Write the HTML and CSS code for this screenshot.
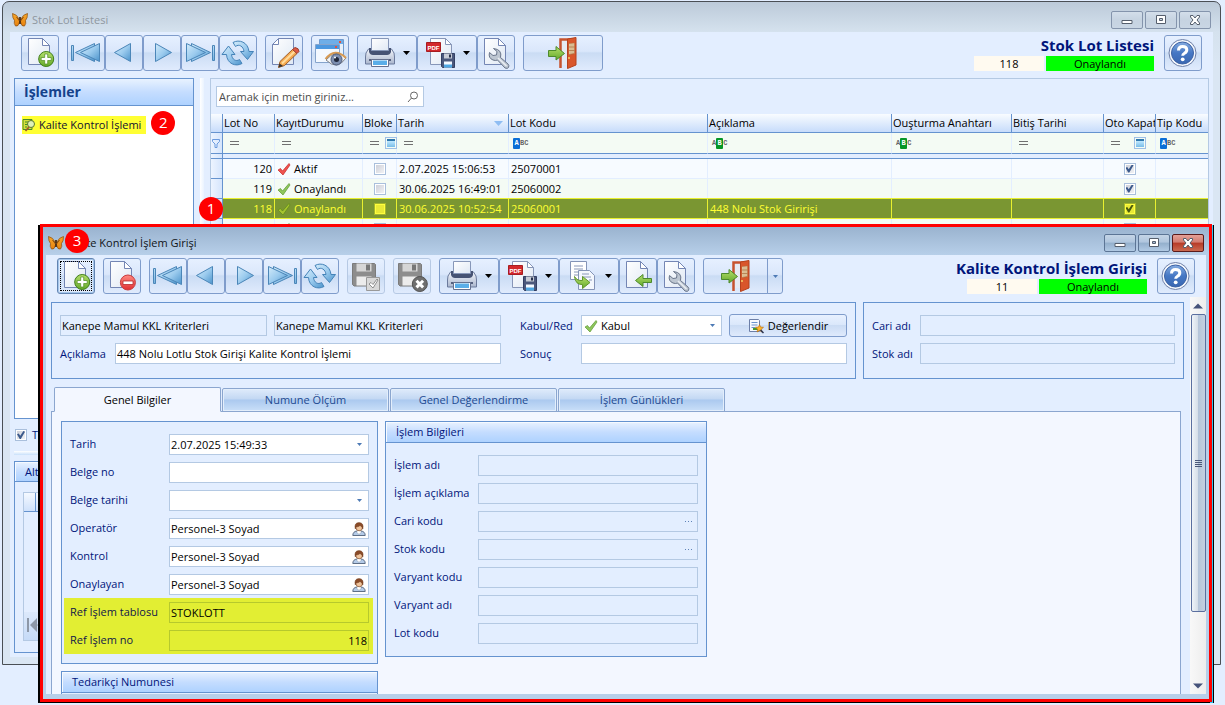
FILE: index.html
```html
<!DOCTYPE html>
<html lang="tr">
<head>
<meta charset="utf-8">
<title>Stok Lot Listesi</title>
<link rel="stylesheet" href="styles.css">
</head>
<body>
<svg class="sprite" aria-hidden="true">
<defs>
<linearGradient id="gPage" x1="0" y1="0" x2="1" y2="1"><stop offset="0" stop-color="#fff"/><stop offset="1" stop-color="#dfe8f4"/></linearGradient>
<linearGradient id="gBlue" x1="0" y1="0" x2="1" y2="1"><stop offset="0" stop-color="#d3ebfa"/><stop offset=".5" stop-color="#9bcbee"/><stop offset="1" stop-color="#4b93cb"/></linearGradient>
<linearGradient id="gGreen" x1="0" y1="0" x2="0" y2="1"><stop offset="0" stop-color="#b5df6c"/><stop offset="1" stop-color="#63a92a"/></linearGradient>
<linearGradient id="gRed" x1="0" y1="0" x2="0" y2="1"><stop offset="0" stop-color="#ff8a80"/><stop offset="1" stop-color="#e02f33"/></linearGradient>
<linearGradient id="gHelp" x1="0" y1="0" x2="0" y2="1"><stop offset="0" stop-color="#86ace0"/><stop offset=".5" stop-color="#4577c4"/><stop offset="1" stop-color="#3a67b1"/></linearGradient>
<linearGradient id="gSteel" x1="0" y1="0" x2="0" y2="1"><stop offset="0" stop-color="#f2f5fb"/><stop offset="1" stop-color="#aab6cd"/></linearGradient>
<linearGradient id="gWing" x1="0" y1="0" x2="0" y2="1"><stop offset="0" stop-color="#f7a82a"/><stop offset="1" stop-color="#e8820f"/></linearGradient>
</defs>
<symbol id="page" viewBox="0 0 36 34"><path d="M6.500 2.500H20.500L27.500 9.500V28.500H6.500Z" fill="url(#gPage)" stroke="#7486b4"/><path d="M20.500 2.500V9.500H27.500Z" fill="#fff" stroke="#7486b4" stroke-linejoin="round"/></symbol>
<symbol id="new" viewBox="0 0 36 34"><use href="#page"/><circle cx="24.200" cy="23" r="7.500" fill="url(#gGreen)" stroke="#3f7d17"/><path d="M22.700 18h3v3.500h3.500v3h-3.500V28h-3v-3.500h-3.500v-3h3.500z" fill="#fff" stroke="#4d8c20" stroke-width=".7"/></symbol>
<symbol id="del" viewBox="0 0 36 34"><use href="#page"/><circle cx="23.900" cy="23.500" r="7.500" fill="url(#gRed)" stroke="#c93a3c"/><path d="M19 22h10v3.500H19z" fill="#fff" stroke="#b52c2e" stroke-width=".8"/></symbol>
<symbol id="first" viewBox="0 0 36 34"><g stroke="#4b86b8" fill="url(#gBlue)"><path d="M3.500 9.500h2v15h-2z"/><path d="M7.500 16.500L26.500 7.500V25.500Z"/><path d="M12.500 16.500L31.500 7.500V25.500Z"/></g></symbol>
<symbol id="prev" viewBox="0 0 36 34"><path d="M8.500 16.500L24.500 7.500V25.500Z" fill="url(#gBlue)" stroke="#4b86b8"/></symbol>
<symbol id="next" viewBox="0 0 36 34"><path d="M27.500 16.500L11.500 7.500V25.500Z" fill="url(#gBlue)" stroke="#4b86b8"/></symbol>
<symbol id="last" viewBox="0 0 36 34"><g stroke="#4b86b8" fill="url(#gBlue)"><path d="M30.500 9.500h2v15h-2z"/><path d="M9.500 7.500L28.500 16.500L9.500 25.500Z"/><path d="M4.500 7.500L23.500 16.500L4.500 25.500Z"/></g></symbol>
<symbol id="refresh" viewBox="0 0 36 34"><g stroke="#4583b8" fill="url(#gBlue)" stroke-linejoin="round"><path d="M13 6.500C19 3 28 6 29 15.500H33.500L27.500 23.500L20.500 15.500H24C23.500 10.500 19 7.500 15.500 10.500Z"/><path d="M22 27.500C16 31 7 28 6.500 18.500H2L8.500 10L15 18.500H11.500C12 23.500 16 26 19.500 23.500Z"/></g></symbol>
<symbol id="edit" viewBox="0 0 36 34"><path d="M12.500 2.500H27.500V28.500H6.500V8.500Z" fill="url(#gPage)" stroke="#7486b4"/><path d="M12.500 2.500V8.500H6.500Z" fill="#fff" stroke="#7486b4"/><path d="M12.500 31.500L14 25.500L26.500 13.500L31 17.500L18.500 29.500Z" fill="#f4a950" stroke="#a0602b"/><path d="M16 27.500L28.500 15.500" stroke="#ffdc9c" stroke-width="2"/><path d="M26.500 13.500L29 11.500Q33 12 33 15.500L31 17.500Z" fill="#dc5844" stroke="#9c4030"/><path d="M12.500 31.500L13.500 27.500L17 30Z" fill="#333"/></symbol>
<symbol id="eye" viewBox="0 0 36 34"><path d="M7.500 3.500h24v19h-24z" fill="#e8f1fb" stroke="#6f9bd0"/><path d="M8 4h23v4H8z" fill="#6eaee8"/><path d="M3.500 8.500h24v18h-24z" fill="#f3f8ff" stroke="#86a4cc"/><path d="M4 9h23v4H4z" fill="#4c98e0"/><path d="M27 5h2v2h-2zM23 10h2v2h-2z" fill="#e4523c"/><path d="M14 24Q24 12 34 22Q25 35 14 24Z" fill="#f2f4f6" stroke="#7d8088"/><path d="M13.500 23Q23 11 34 22" fill="none" stroke="#d79a54" stroke-width="2"/><circle cx="24.500" cy="23.500" r="5.500" fill="#7c8eb0" stroke="#4c5978"/><circle cx="24.500" cy="23.500" r="2.500" fill="#20283c"/><circle cx="23" cy="21.500" r="1" fill="#fff"/></symbol>
<symbol id="print" viewBox="0 0 36 34"><path d="M6.500 13Q3 17 3.500 21V28H32.500V21Q33 17 29.500 13Z" fill="url(#gSteel)" stroke="#6b7a9c"/><path d="M7 12h22v4q-1 3-4 3H11q-3 0-4-3z" fill="#465374"/><path d="M9.500 2.500h17v12h-17z" fill="url(#gPage)" stroke="#8797b8"/><path d="M7 23h22v2H7z" fill="#56617f"/><path d="M9.500 23.500h17v7h-17z" fill="#fff" stroke="#65718f"/><path d="M11 24.500h14v4.500H11z" fill="#5aaee8"/></symbol>
<symbol id="pdf" viewBox="0 0 36 34"><path d="M8.500 2.500H23.500L29.500 8.500V28.500H8.500Z" fill="url(#gPage)" stroke="#8796b8"/><path d="M23.500 2.500V8.500H29.500Z" fill="#fff" stroke="#8796b8"/><path d="M4.500 6.500h14v9h-14z" fill="#d3282c" stroke="#a71d20"/><path d="M19.500 17.500h13v14h-12l-1-1z" fill="#4b587c" stroke="#333f63"/><path d="M22 17.500h8v5h-8z" fill="#c7ccd7"/><path d="M27 18.500h2v3h-2z" fill="#26304b"/><path d="M22 25.500h8v6h-8z" fill="#f5f9ff"/><path d="M22 28.500h8v3h-8z" fill="#4fa7e3"/></symbol>
<symbol id="wrench" viewBox="0 0 36 34"><use href="#page"/><path d="M15.500 12.500L19 15.500L18.500 19L15 19.500L11.500 16.500Q10 22 15 24Q17.500 25 19.500 24L27 32Q29.500 33 30.500 31.500Q31.500 29.500 30 28L22.500 21.500Q24.500 13.500 15.500 12.500Z" fill="#bdc6d1" stroke="#69758a"/><path d="M20 22L28.500 30" stroke="#e9edf2" stroke-width="1.500"/></symbol>
<symbol id="exit" viewBox="0 0 36 34"><path d="M15.500 32V3.500H30" fill="none" stroke="#c7532e" stroke-width="2.500"/><path d="M17 5h5v24h-5z" fill="#e5eaf3"/><path d="M22.500 3L31 1.500V29L22.500 32.500Z" fill="#d9562b" stroke="#b5411c"/><path d="M24 7.500l5.500-.5v10.500l-5.500 1z" fill="#f5e7c1" stroke="#b36a3a" stroke-width=".6"/><path d="M24 11h5.500M24 14.500h5.500M26 7.500v11M28 7.500v11" stroke="#a96f3c" stroke-width=".7"/><circle cx="24" cy="22" r="1" fill="#f3cf67"/><path d="M3.500 14.500H11V10.500L19.500 17.500L11 24V20.500H3.500Z" fill="url(#gGreen)" stroke="#4d8a2d"/></symbol>
<symbol id="save" viewBox="0 0 36 34"><path d="M4.500 4.500h22l1 1v21.500H6l-1.500-1.500z" fill="#8d8d8d" stroke="#7b7b7b"/><path d="M8.500 4.500h15v8h-15z" fill="#d6d6d6"/><path d="M18 5.500h4v6h-4z" fill="#777"/><path d="M8.500 17.500h15v9h-15z" fill="#ececec"/></symbol>
<symbol id="saveok" viewBox="0 0 36 34"><use href="#save"/><path d="M18.500 18.500h13v13h-13z" fill="#d8d8d8" stroke="#999"/><path d="M21 25l2-1.500 2 2 4-5.500 1 1-5 8z" fill="#fff" stroke="#777" stroke-width=".8"/></symbol>
<symbol id="savex" viewBox="0 0 36 34"><use href="#save"/><circle cx="25.800" cy="25" r="7.500" fill="#6e6e6e" stroke="#525252"/><path d="M22.500 21.800l6.600 6.600M29.100 21.800l-6.600 6.600" stroke="#fff" stroke-width="3"/></symbol>
<symbol id="copy" viewBox="0 0 36 34"><path d="M6.500 2.500h16v18h-16z" fill="#fff" stroke="#8494b7"/><path d="M10 7h9M10 10h9M10 13h6M10 16h5" stroke="#8a98b8"/><path d="M14.500 11.500h11l5 5v14h-16z" fill="#f3f7fd" stroke="#8494b7"/><path d="M18 15h7M18 18h9M25 21h3" stroke="#8a98b8"/><path d="M10.500 17.500Q13 22 18.500 21.500V17.500L26 23.500L18.500 29.500V25.500Q11.500 26 10.500 17.500Z" fill="url(#gGreen)" stroke="#62962e"/></symbol>
<symbol id="pull" viewBox="0 0 36 34"><use href="#page"/><path d="M15.500 21.500L23 15.500V19.500H31.500V23.500H23V27.500Z" fill="url(#gGreen)" stroke="#4d8a2d"/></symbol>
<symbol id="help" viewBox="0 0 36 34"><circle cx="17.500" cy="17" r="13.500" fill="#f4f7fc" stroke="#6d7fa8"/><circle cx="17.500" cy="17" r="11" fill="url(#gHelp)" stroke="#3d62a4"/><path d="M13.500 14.500Q13.500 10.500 17.500 10.500Q21.800 10.500 21.800 13.700Q21.800 16 19.500 17.200Q17.700 18.200 17.700 19.800" fill="none" stroke="#fff" stroke-width="3"/><circle cx="17.700" cy="23.300" r="1.900" fill="#fff"/></symbol>
<symbol id="butterfly" viewBox="0 0 16 16"><path d="M7.500 8Q5 2 .5 1.500Q.3 6 2.500 8.500Q1.500 11.500 3.500 14Q6.500 15 7.500 10Z" fill="url(#gWing)" stroke="#8a4d10" stroke-width=".7"/><path d="M8.500 8Q11 2 15.500 1.500Q15.700 6 13.500 8.500Q14.500 11.500 12.500 14Q9.500 15 8.500 10Z" fill="url(#gWing)" stroke="#8a4d10" stroke-width=".7"/><path d="M8 5v7" stroke="#4a2c12" stroke-width="1.800"/><path d="M4.500 5l3 4M11.500 5L8.500 9" stroke="#8a4d10"/></symbol>
<symbol id="tick" viewBox="0 0 14 14"><path d="M1 8L3.500 6.500L5.500 9L12 1.500L13 3L6 13Z" stroke-width=".7"/></symbol>
<symbol id="person" viewBox="0 0 14 14"><path d="M.8 13.500Q.8 9.500 5 9h4q4.200 .5 4.200 4.500z" fill="#b4cbe8" stroke="#50617b" stroke-width=".9"/><path d="M5 8.500h4v2L7 12.500L5 10.500z" fill="#fff" stroke="#8090a4" stroke-width=".5"/><circle cx="7.200" cy="5.500" r="3.300" fill="#f0c49c" stroke="#89532e" stroke-width=".7"/><path d="M3.300 7Q1.800 .8 7 .6Q12.200 .8 10.800 7Q10 4 8 3.500Q5.500 5.500 4.300 4.500Z" fill="#8a4b28" stroke="#6e3a1c" stroke-width=".5"/></symbol>
<symbol id="caret" viewBox="0 0 7 4"><path d="M0 0H7L3.500 4Z"/></symbol>
</svg>

<main class="desktop">
<section class="window" aria-label="Stok Lot Listesi">
  <header class="titlebar">
    <svg class="app-icon"><use href="#butterfly"/></svg>
    <span class="title">Stok Lot Listesi</span>
    <button class="win-btn" aria-label="Simge durumuna küçült"><svg viewBox="0 0 12 12"><path d="M1 6.500h10v3H1z"/></svg></button>
    <button class="win-btn" aria-label="Ekranı kapla"><svg viewBox="0 0 12 12"><path d="M1.500 1.500h9v8h-9zM4.500 4.500h3v2h-3z"/></svg></button>
    <button class="win-btn" aria-label="Kapat"><svg viewBox="0 0 12 12"><path d="M1.500 1.500H4L6 4L8 1.500h2.500v1.500L8 6l2.500 3v1.500H8L6 8L4 10.500H1.500V9L4 6L1.500 3z"/></svg></button>
  </header>
  <div class="client">
    <div class="toolbar">
      <div class="tools">
        <button class="tool" aria-label="Yeni"><svg><use href="#new"/></svg></button>
        <div class="tool-set">
          <button class="tool" aria-label="İlk"><svg><use href="#first"/></svg></button>
          <button class="tool" aria-label="Önceki"><svg><use href="#prev"/></svg></button>
          <button class="tool" aria-label="Sonraki"><svg><use href="#next"/></svg></button>
          <button class="tool" aria-label="Son"><svg><use href="#last"/></svg></button>
          <button class="tool" aria-label="Yenile"><svg><use href="#refresh"/></svg></button>
        </div>
        <button class="tool" aria-label="Düzenle"><svg><use href="#edit"/></svg></button>
        <button class="tool" aria-label="İncele"><svg><use href="#eye"/></svg></button>
        <div class="tool-set">
          <button class="tool menu" aria-label="Yazdır"><svg><use href="#print"/></svg><svg class="caret"><use href="#caret"/></svg></button>
          <button class="tool menu" aria-label="PDF kaydet"><svg><use href="#pdf"/><text x="11.500" y="13.500" class="pdf-mark">PDF</text></svg><svg class="caret"><use href="#caret"/></svg></button>
          <button class="tool" aria-label="Ayarlar"><svg><use href="#wrench"/></svg></button>
        </div>
        <button class="tool wide" aria-label="Çıkış"><svg><use href="#exit"/></svg></button>
      </div>
      <div class="record">
        <h1>Stok Lot Listesi</h1>
        <div class="state"><span class="rec-no">118</span><span class="rec-state">Onaylandı</span></div>
      </div>
      <button class="tool" aria-label="Yardım"><svg><use href="#help"/></svg></button>
    </div>

    <div class="workspace">
      <aside class="sidebar">
        <section class="panel actions">
          <h2>İşlemler</h2>
          <div class="action-row">
            <a href="#kalite"><svg viewBox="0 0 14 14"><path d="M1 1.500h9v10H1z" fill="#d6e03a" stroke="#4a8a2a"/><path d="M3 4h4M3 6.500h3M3 9h2" stroke="#3f8a2a"/><circle cx="9" cy="6" r="3.500" fill="#dff0b8" stroke="#5b7a2c"/><path d="M7 9L3.500 13" stroke="#a05a2a" stroke-width="1.800"/></svg>Kalite Kontrol İşlemi</a>
            <span class="badge">2</span>
          </div>
        </section>
        <label class="option"><input type="checkbox" class="check" checked>T</label>
        <div class="split-h"></div>
        <section class="panel details">
          <h3>Alt</h3>
          <div class="mini-grid"><div class="mini-head"></div><div class="mini-nav"><svg viewBox="0 0 20 16"><path d="M1 1h2v14H1zM11 1v14L4 8zM19 1v14l-8-7z" fill="#8d98a8"/></svg></div></div>
        </section>
      </aside>
      <div class="split-v"></div>
      <section class="grid-panel">
        <span class="badge row-badge">1</span>
        <label class="search"><input type="search" placeholder="Aramak için metin giriniz..." aria-label="Aramak için metin giriniz"><svg viewBox="0 0 12 12"><circle cx="7" cy="4.500" r="3.500"/><path d="M4.500 7L1 11"/></svg></label>
        <table>
          <colgroup><col class="c-ind"><col class="c-no"><col class="c-rec"><col class="c-blk"><col class="c-date"><col class="c-lot"><col class="c-desc"><col class="c-key"><col class="c-end"><col class="c-auto"><col></colgroup>
          <thead>
            <tr><th></th><th>Lot No</th><th>KayıtDurumu</th><th>Bloke</th><th><span class="sorted">Tarih<svg class="sort" viewBox="0 0 9 5"><path d="M0 0h9L4.500 5z"/></svg></span></th><th>Lot Kodu</th><th>Açıklama</th><th>Ouşturma Anahtarı</th><th>Bitiş Tarihi</th><th>Oto Kapat</th><th>Tip Kodu</th></tr>
            <tr class="filter">
              <td class="ind"><svg class="funnel" viewBox="0 0 8 10"><path d="M.5 1.500h7v2L5 6v3.500H3V6L.5 3.500z"/></svg></td>
              <td><i class="eq"></i></td><td><i class="eq"></i></td><td><span class="eq-pair"><i class="eq"></i><i class="tri"></i></span></td><td><i class="eq"></i></td>
              <td><span class="abc starts"><b>A</b>BC</span></td><td><span class="abc has">A<b>B</b>C</span></td><td><span class="abc has">A<b>B</b>C</span></td><td><i class="eq"></i></td><td><span class="eq-pair far"><i class="eq"></i><i class="tri"></i></span></td><td><span class="abc starts"><b>A</b>BC</span></td>
            </tr>
          </thead>
          <tbody>
            <tr class="gap"><td class="ind"></td><td colspan="10"></td></tr>
            <tr><td class="ind"></td><td class="num">120</td><td><span class="status"><svg class="tick red"><use href="#tick"/></svg>Aktif</span></td><td class="mid"><input type="checkbox" class="check" aria-label="Bloke"></td><td>2.07.2025 15:06:53</td><td>25070001</td><td></td><td></td><td></td><td class="mid"><input type="checkbox" class="check" checked aria-label="Oto Kapat"></td><td></td></tr>
            <tr class="even"><td class="ind"></td><td class="num">119</td><td><span class="status"><svg class="tick green"><use href="#tick"/></svg>Onaylandı</span></td><td class="mid"><input type="checkbox" class="check" aria-label="Bloke"></td><td>30.06.2025 16:49:01</td><td>25060002</td><td></td><td></td><td></td><td class="mid"><input type="checkbox" class="check" checked aria-label="Oto Kapat"></td><td></td></tr>
            <tr class="selected"><td class="ind"></td><td class="num">118</td><td><span class="status"><svg class="tick olive"><use href="#tick"/></svg>Onaylandı</span></td><td class="mid"><input type="checkbox" class="check" aria-label="Bloke"></td><td>30.06.2025 10:52:54</td><td>25060001</td><td>448 Nolu Stok Giririşi</td><td></td><td></td><td class="mid"><input type="checkbox" class="check" checked aria-label="Oto Kapat"></td><td></td></tr>
            <tr class="even"><td class="ind"></td><td></td><td><span class="status"><svg class="tick green"><use href="#tick"/></svg></span></td><td class="mid"><input type="checkbox" class="check" aria-label="Bloke"></td><td></td><td></td><td></td><td></td><td></td><td class="mid"><input type="checkbox" class="check" aria-label="Oto Kapat"></td><td></td></tr>
          </tbody>
        </table>
      </section>
    </div>
  </div>
</section>

<section class="dialog" role="dialog" aria-label="Kalite Kontrol İşlem Girişi">
  <header class="titlebar">
    <svg class="app-icon"><use href="#butterfly"/></svg>
    <span class="title">Kalite Kontrol İşlem Girişi</span>
    <span class="badge title-badge">3</span>
    <button class="win-btn" aria-label="Simge durumuna küçült"><svg viewBox="0 0 12 12"><path d="M1 6.500h10v3H1z"/></svg></button>
    <button class="win-btn" aria-label="Ekranı kapla"><svg viewBox="0 0 12 12"><path d="M1.500 1.500h9v8h-9zM4.500 4.500h3v2h-3z"/></svg></button>
    <button class="win-btn close" aria-label="Kapat"><svg viewBox="0 0 12 12"><path d="M1.500 1.500H4L6 4L8 1.500h2.500v1.500L8 6l2.500 3v1.500H8L6 8L4 10.500H1.500V9L4 6L1.500 3z"/></svg></button>
  </header>
  <div class="client">
    <div class="toolbar">
      <div class="tools">
        <button class="tool focused" aria-label="Yeni"><svg><use href="#new"/></svg></button>
        <button class="tool" aria-label="Sil"><svg><use href="#del"/></svg></button>
        <div class="tool-set">
          <button class="tool" aria-label="İlk"><svg><use href="#first"/></svg></button>
          <button class="tool" aria-label="Önceki"><svg><use href="#prev"/></svg></button>
          <button class="tool" aria-label="Sonraki"><svg><use href="#next"/></svg></button>
          <button class="tool" aria-label="Son"><svg><use href="#last"/></svg></button>
          <button class="tool" aria-label="Yenile"><svg><use href="#refresh"/></svg></button>
        </div>
        <button class="tool" disabled aria-label="Kaydet"><svg><use href="#saveok"/></svg></button>
        <button class="tool" disabled aria-label="Vazgeç"><svg><use href="#savex"/></svg></button>
        <div class="tool-set">
          <button class="tool menu" aria-label="Yazdır"><svg><use href="#print"/></svg><svg class="caret"><use href="#caret"/></svg></button>
          <button class="tool menu" aria-label="PDF kaydet"><svg><use href="#pdf"/><text x="11.500" y="13.500" class="pdf-mark">PDF</text></svg><svg class="caret"><use href="#caret"/></svg></button>
          <button class="tool menu" aria-label="Kopyala"><svg><use href="#copy"/></svg><svg class="caret"><use href="#caret"/></svg></button>
          <button class="tool" aria-label="Aktar"><svg><use href="#pull"/></svg></button>
          <button class="tool" aria-label="Ayarlar"><svg><use href="#wrench"/></svg></button>
        </div>
        <div class="split-button">
          <button class="tool" aria-label="Çıkış"><svg><use href="#exit"/></svg></button><button class="tool drop" aria-label="Çıkış seçenekleri"><svg class="caret small"><use href="#caret"/></svg></button>
        </div>
      </div>
      <div class="record">
        <h1>Kalite Kontrol İşlem Girişi</h1>
        <div class="state"><span class="rec-no">11</span><span class="rec-state">Onaylandı</span></div>
      </div>
      <button class="tool" aria-label="Yardım"><svg><use href="#help"/></svg></button>
    </div>

    <div class="scroller">
      <div class="form">
        <div class="summary">
          <div class="box summary-main">
            <div class="line">
              <input class="field criterion" value="Kanepe Mamul KKL Kriterleri" readonly aria-label="Kriter kodu">
              <input class="field grow" value="Kanepe Mamul KKL Kriterleri" readonly aria-label="Kriter adı">
            </div>
            <div class="line result">
              <label for="kabul">Kabul/Red</label>
              <span class="field combo"><svg class="tick green"><use href="#tick"/></svg><select id="kabul"><option>Kabul</option></select><svg class="caret small"><use href="#caret"/></svg></span>
              <button class="evaluate"><svg viewBox="0 0 16 16"><path d="M1.500 1.500h9l1 1v11h-10z" fill="#f7faff" stroke="#6c7fa8"/><path d="M3.500 4.500h6M3.500 7h6M3.500 9.500h4" stroke="#6a94cf"/><path d="M5 11h5" stroke="#4d9a2c" stroke-width="2"/><path d="M11.500 6.500l1 2.500 3 .3-2.200 1.900.7 2.800-2.500-1.500-2.500 1.500.7-2.800-2.200-1.900 3-.3z" fill="#ffb62e" stroke="#b77117" stroke-width=".7"/><path d="M12.500 12l3 3" stroke="#2b3350" stroke-width="1.500"/></svg>Değerlendir</button>
            </div>
            <div class="line">
              <label for="aciklama">Açıklama</label>
              <input class="field grow" id="aciklama" value="448 Nolu Lotlu Stok Girişi Kalite Kontrol İşlemi">
            </div>
            <div class="line result">
              <label for="sonuc">Sonuç</label>
              <input class="field grow" id="sonuc">
            </div>
          </div>
          <div class="box account">
            <label for="cariadi">Cari adı</label><input class="field" id="cariadi" readonly>
            <label for="stokadi">Stok adı</label><input class="field" id="stokadi" readonly>
          </div>
        </div>

        <div class="tabs" role="tablist">
          <button role="tab" class="tab active" aria-selected="true">Genel Bilgiler</button>
          <button role="tab" class="tab">Numune Ölçüm</button>
          <button role="tab" class="tab">Genel Değerlendirme</button>
          <button role="tab" class="tab">İşlem Günlükleri</button>
        </div>
        <div class="tab-page">
          <div class="col-left">
            <div class="box general">
              <div class="row"><label for="tarih">Tarih</label><span class="field combo"><input id="tarih" value="2.07.2025 15:49:33"><svg class="caret small"><use href="#caret"/></svg></span></div>
              <div class="row"><label for="belgeno">Belge no</label><input class="field" id="belgeno"></div>
              <div class="row"><label for="belgetarihi">Belge tarihi</label><span class="field combo"><input id="belgetarihi"><svg class="caret small"><use href="#caret"/></svg></span></div>
              <div class="row"><label for="operator">Operatör</label><span class="field combo"><input id="operator" value="Personel-3 Soyad"><svg class="person"><use href="#person"/></svg></span></div>
              <div class="row"><label for="kontrol">Kontrol</label><span class="field combo"><input id="kontrol" value="Personel-3 Soyad"><svg class="person"><use href="#person"/></svg></span></div>
              <div class="row"><label for="onaylayan">Onaylayan</label><span class="field combo"><input id="onaylayan" value="Personel-3 Soyad"><svg class="person"><use href="#person"/></svg></span></div>
              <div class="marked">
                <div class="row"><label for="reftablo">Ref İşlem tablosu</label><input class="field" id="reftablo" value="STOKLOTT" readonly></div>
                <div class="row"><label for="refno">Ref İşlem no</label><input class="field right" id="refno" value="118" readonly></div>
              </div>
            </div>
            <div class="box sample"><h3>Tedarikçi Numunesi</h3></div>
          </div>
          <div class="box process">
            <h3>İşlem Bilgileri</h3>
            <div class="process-rows">
              <div class="row"><label for="islemadi">İşlem adı</label><input class="field" id="islemadi" readonly></div>
              <div class="row"><label for="islemac">İşlem açıklama</label><input class="field" id="islemac" readonly></div>
              <div class="row"><label for="carikodu">Cari kodu</label><span class="field combo ro"><input id="carikodu" readonly><svg class="dots" viewBox="0 0 8 2"><path d="M0 0h1v1H0zM3 0h1v1H3zM6 0h1v1H6z"/></svg></span></div>
              <div class="row"><label for="stokkodu">Stok kodu</label><span class="field combo ro"><input id="stokkodu" readonly><svg class="dots" viewBox="0 0 8 2"><path d="M0 0h1v1H0zM3 0h1v1H3zM6 0h1v1H6z"/></svg></span></div>
              <div class="row"><label for="varkodu">Varyant kodu</label><input class="field" id="varkodu" readonly></div>
              <div class="row"><label for="varadi">Varyant adı</label><input class="field" id="varadi" readonly></div>
              <div class="row"><label for="lotkodu">Lot kodu</label><input class="field" id="lotkodu" readonly></div>
            </div>
          </div>
        </div>
      </div>
      <div class="scrollbar" aria-hidden="true">
        <svg class="arrow" viewBox="0 0 10 6"><path d="M0 5.500L5 .5l5 5z"/></svg>
        <div class="thumb"><i></i><i></i><i></i><i></i></div>
        <svg class="arrow" viewBox="0 0 10 6"><path d="M0 .5h10l-5 5z"/></svg>
      </div>
    </div>
  </div>
</section>
</main>
</body>
</html>
```
FILE: styles.css
```css
:root {
  --face: #e3eeff;
  --line: #6593cf;
  --soft: #b4c9e3;
  --navy: #00157a;
  --head: linear-gradient(#e8f2ff, #c5ddff 50%, #aed2ff);
}

* { box-sizing: border-box; }

body {
  margin: 0;
  background: var(--face);
  color: #000;
  font-family: "Open Sans", "Noto Sans", sans-serif;
  font-size: 11px;
  line-height: 16px;
}

button, input, select { font: inherit; color: inherit; margin: 0; }
button { padding: 0; cursor: pointer; }
h1, h2, h3 { margin: 0; }
.sprite { position: absolute; width: 0; height: 0; }
.pdf-mark { font: bold 6px "Liberation Sans", sans-serif; fill: #fff; text-anchor: middle; }

.desktop {
  position: relative;
  display: flex;
  min-height: 100vh;
  padding: 1px 4px 40px 2px;
  overflow: hidden;
}

/* window frame */
.window {
  flex: 1;
  min-width: 0;
  display: flex;
  flex-direction: column;
  padding: 0 7px 7px;
  border: 1px solid #4a4f55;
  border-radius: 7px 7px 0 0;
  background: linear-gradient(#bccad9, #d5e2ee 30px, #dae6f3 60px);
}

.titlebar {
  display: flex;
  align-items: center;
  gap: 2px;
  height: 30px;
  padding: 6px 2px 0;
}
.app-icon { width: 16px; height: 16px; }
.title { flex: 1; padding-left: 2px; color: #8f979f; }

.win-btn {
  display: flex;
  justify-content: center;
  align-items: center;
  width: 32px;
  height: 18px;
  border: 1px solid #8494ac;
  border-radius: 2px;
  background: linear-gradient(#d3deea, #c6d3e1 50%, #c9d6e4);
}
.win-btn svg { width: 12px; height: 12px; }
.win-btn path { fill: #fff; stroke: #555e6c; fill-rule: evenodd; }

.client {
  flex: 1;
  min-height: 0;
  display: flex;
  flex-direction: column;
  background: var(--face);
}

/* toolbar */
.toolbar {
  display: flex;
  align-items: flex-start;
  gap: 10px;
  padding: 3px 11px 7px;
}
.tools { flex: 1; display: flex; gap: 8px; }
.tool-set, .split-button { display: flex; }

.tool {
  display: flex;
  align-items: center;
  justify-content: center;
  width: 38px;
  height: 36px;
  border: 1px solid #7f9ccb;
  border-radius: 3px;
  background: linear-gradient(#e6f0ff, #dae7fb 45%, #cadcf4 50%, #e0ebfd);
}
.tool svg { width: 36px; height: 34px; flex: none; }
.tool.menu { width: 60px; justify-content: flex-start; gap: 5px; padding-left: 4px; }
.tool.wide { width: 80px; }
.tool .caret, .caret { width: 7px; height: 4px; }
.tool .caret.small, .caret.small { width: 5px; height: 3px; fill: #4d7ab5; flex: none; }
.tool:disabled { border-color: #b6c9e4; }
.tool.focused {
  border: 1px solid #6284b2;
  box-shadow: inset 0 0 0 1px #a4c6ea;
  outline: 1px dotted #000;
  outline-offset: -4px;
}
.split-button .tool { width: 65px; border-radius: 3px 0 0 3px; }
.split-button .drop { width: 16px; margin-left: -1px; border-radius: 0 3px 3px 0; }

.record { display: flex; flex-direction: column; align-items: flex-end; }
.record h1 { color: var(--navy); font-size: 15px; line-height: 21px; font-weight: 700; }
.state { display: flex; gap: 2px; line-height: 15px; text-align: center; }
.rec-no { width: 70px; background: #fffaf0; }
.rec-state { width: 108px; background: #0f0; }

/* main workspace */
.workspace {
  flex: 1;
  display: flex;
  gap: 6px;
  padding: 0 4px 4px;
}
.sidebar { width: 180px; display: flex; flex-direction: column; }
.panel { border: 1px solid var(--line); }
.panel.actions { height: 341px; background: #fff; }
.panel h2 {
  padding: 0 9px;
  border-bottom: 1px solid var(--line);
  background: var(--head);
  color: #15428b;
  font-size: 14px;
  line-height: 26px;
}
.panel h3, .box h3 {
  padding: 0 10px;
  border-bottom: 1px solid var(--line);
  background: var(--head);
  box-shadow: inset 1px 1px #f6faff;
  color: var(--navy);
  font-size: 11px;
  font-weight: 400;
  line-height: 20px;
}
.panel.details h3 { line-height: 19px; }
.action-row { display: flex; align-items: center; gap: 5px; padding: 5px 7px; }
.action-row a {
  display: flex;
  align-items: center;
  gap: 3px;
  height: 18px;
  margin-top: 3px;
  padding-right: 5px;
  background: #ff3;
  color: #101030;
  text-decoration: none;
}
.action-row svg { width: 14px; height: 14px; }

.badge {
  width: 24px;
  height: 24px;
  flex: none;
  border-radius: 50%;
  background: #f00;
  color: #fff;
  font-size: 15px;
  line-height: 23px;
  text-align: center;
}
.row-badge { position: absolute; left: -12px; top: 118px; z-index: 1; }
.title-badge { position: absolute; left: 22px; top: 2px; }

.option { display: flex; align-items: center; gap: 5px; padding: 8px 1px; color: var(--navy); }
.split-h { height: 4px; background: linear-gradient(#fff, #c8e0fb); }
.split-v { width: 4px; background: linear-gradient(90deg, #fff, #eaf3ff); }
.panel.details { flex: 1; display: flex; flex-direction: column; margin-top: 6px; }
.mini-grid { flex: 1; display: flex; flex-direction: column; margin: 10px 8px 11px; border: 1px solid var(--soft); }
.mini-head { height: 19px; border-bottom: 1px solid var(--line); background: linear-gradient(90deg, transparent 11px, var(--line) 11px, var(--line) 12px, transparent 12px), linear-gradient(#f5f9ff, #cfe1fb); }
.mini-nav { margin-top: auto; height: 28px; padding: 5px 2px; background: linear-gradient(#dce9fb, #c6dbf7); }
.mini-nav svg { width: 20px; height: 16px; }

.grid-panel { position: relative; flex: 1; min-width: 0; border: 1px solid var(--soft); }
.search {
  display: flex;
  align-items: center;
  width: 208px;
  height: 21px;
  margin: 7px 5px;
  padding: 0 4px 0 2px;
  border: 1px solid var(--soft);
  background: #fff;
}
.search input { flex: 1; min-width: 0; padding: 0; border: 0; outline: 0; background: none; }
.search input::placeholder { color: #4c4c4c; opacity: 1; }
.search svg { width: 12px; height: 12px; fill: none; stroke: #666; }

table { width: 100%; border-collapse: separate; border-spacing: 0; table-layout: fixed; }
.c-ind { width: 12px; }
.c-no, .c-auto { width: 52px; }
.c-rec { width: 88px; }
.c-blk { width: 34px; }
.c-date { width: 112px; }
.c-lot { width: 199px; }
.c-desc { width: 184px; }
.c-key { width: 120px; }
.c-end { width: 92px; }
th {
  height: 19px;
  padding: 0 0 0 1px;
  border-right: 1px solid var(--line);
  border-bottom: 1px solid var(--line);
  background: linear-gradient(#f9fcff, #c7dcfb);
  font-weight: 400;
  line-height: 16px;
  text-align: left;
  white-space: nowrap;
  overflow: hidden;
}
td {
  height: 20px;
  padding: 0 2px;
  border-right: 1px solid #e3eeff;
  border-bottom: 1px solid #e3eeff;
  background: #f7fbff;
  line-height: 16px;
  white-space: nowrap;
}
th:last-child, td:last-child { border-right: 0; }
.sorted { display: flex; align-items: center; justify-content: space-between; padding-right: 5px; }
.sort { width: 9px; height: 5px; fill: #8fbdf3; }
.filter td { height: 21px; padding: 0 4px; border-bottom-color: var(--line); background: #f4fbf4; }
.gap td { height: 5px; border-bottom-color: var(--line); background: var(--face); }
.even td { background: #f4fbf4; }
td.ind, .filter td.ind {
  padding: 0 1px;
  border-right-color: var(--line);
  border-bottom-color: var(--line);
  background: linear-gradient(90deg, #edf4ff, #d5e5fc);
}
.funnel { display: block; width: 8px; height: 10px; fill: none; stroke: #6b9ade; }
.eq { display: block; width: 9px; height: 4px; margin-left: 3px; flex: none; border: solid #707070; border-width: 1px 0; }
.eq-pair { display: flex; align-items: center; gap: 6px; }
.filter .eq-pair .tri { flex: none; }
.eq-pair.far { gap: 14px; }
.tri {
  width: 12px;
  height: 12px;
  padding: 1px;
  border: 1px solid #9fc0e6;
  background: linear-gradient(#2f78ae 2px, #bfe8ff 2px, #79bde8 8px, #2f78ae 8px) content-box;
}
.abc { display: flex; align-items: center; height: 12px; font: bold 7px/11px "Liberation Mono", monospace; color: #666; }
.abc b { width: 7px; height: 11px; border-radius: 1px; color: #fff; text-align: center; }
.starts b { background: #0b6fd6; }
.has b { background: #069626; }
.num { text-align: right; }
.mid { text-align: center; line-height: 0; }
.status { display: flex; align-items: center; gap: 3px; }
.tick { width: 14px; height: 14px; flex: none; }
.tick.red { fill: #ef5350; stroke: #c62828; }
.tick.green { fill: #8fc65c; stroke: #5d9a34; }
.tick.olive { fill: #a5c42e; stroke: #5f8a1a; }
.selected td:not(.ind) {
  border-color: #e8f030;
  background: #7a9632;
  box-shadow: 0 -1px #e8f030;
  color: #ff3;
}

.check {
  appearance: none;
  display: inline-block;
  width: 12px;
  height: 12px;
  flex: none;
  border: 1px solid #a9bfdc;
  background: linear-gradient(135deg, #c9ccd6, #f6f6f8);
  box-shadow: inset 0 0 0 1px #fff;
}
.check:checked::before {
  content: "";
  display: block;
  width: 8px;
  height: 8px;
  margin: 1px;
  background: #3c5a8c;
  clip-path: polygon(0 40%, 22% 32%, 40% 58%, 80% 0, 100% 8%, 48% 100%, 34% 100%);
}
.selected .check { border-color: #a5b52c; background: #e9e936; box-shadow: inset 0 0 0 1px #ffff3c; }
.selected .check::before { background: #4a5c10; }

/* dialog */
.dialog {
  position: absolute;
  top: 224px;
  right: 13px;
  bottom: 3px;
  left: 40px;
  display: flex;
  flex-direction: column;
  padding: 0 3px 5px;
  border: 3px solid #f00;
  background: linear-gradient(#9ab3cf, #b7cfe9 28px);
  box-shadow: -2px 1px #000, 1px 1px #35c3ee, 2px 1px #000;
}
.dialog .titlebar { height: 28px; padding: 4px 2px 0; }
.dialog .title { color: #101418; }
.dialog .win-btn { border-color: #5c7595; background: linear-gradient(#c4d4e6, #b0c6de 45%, #93afcc 50%, #b1cae4); }
.dialog .win-btn.close { border-color: #5b1b1b; background: linear-gradient(#e5a097, #d27c70 45%, #b73a27 50%, #cb6a51); }
.dialog .toolbar { padding-bottom: 3px; }

.scroller { flex: 1; min-height: 0; display: flex; overflow: hidden; }
.form {
  flex: 1;
  min-width: 0;
  display: flex;
  flex-direction: column;
  padding: 5px 6px 0 5px;
  overflow: hidden;
}
.box { border: 1px solid var(--line); background: var(--face); }
label { color: var(--navy); white-space: nowrap; }

.field {
  width: 100%;
  height: 21px;
  padding: 0 1px;
  border: 1px solid var(--soft);
  border-radius: 0;
  outline: 0;
  background: #fff;
}
.field:read-only:is(input), .field.ro { background: var(--face); }
.field.right { text-align: right; }
.combo { display: flex; align-items: center; padding-right: 6px; }
.combo input, .combo select { flex: 1; min-width: 0; padding: 0; border: 0; outline: 0; background: none; appearance: none; }
.combo .tick { margin: 0 3px 0 1px; }
.person { width: 14px; height: 14px; margin-right: -4px; flex: none; }
.dots { width: 8px; height: 2px; margin-right: -2px; fill: #5f83b8; }

.summary { display: flex; gap: 7px; }
.summary-main {
  flex: 1;
  display: grid;
  grid-template-columns: 1fr 327px;
  grid-auto-rows: 21px;
  gap: 7px 19px;
  padding: 12px 8px 14px;
}
.line { display: flex; align-items: center; gap: 7px; }
.line label { width: 48px; flex: none; }
.line.result label { width: 54px; }
.line .criterion { width: 207px; }
.line .grow { flex: 1; min-width: 0; }
.result .combo { width: 141px; }
.evaluate {
  flex: 1;
  display: flex;
  align-items: center;
  justify-content: center;
  gap: 4px;
  height: 23px;
  border: 1px solid #7f9ccb;
  border-radius: 3px;
  background: linear-gradient(#e8f1ff, #dbe8fb 45%, #cbdcf4 50%, #dfeafc);
}
.evaluate svg { width: 16px; height: 16px; }
.account {
  width: 321px;
  display: grid;
  grid-template-columns: 41px 1fr;
  grid-auto-rows: 21px;
  align-items: center;
  gap: 7px;
  padding: 12px 8px;
}

.tabs { display: flex; align-items: flex-end; gap: 1px; height: 25px; margin: 8px 3px -1px; z-index: 1; }
.tab {
  width: 167px;
  height: 24px;
  border: 1px solid #8ba6cf;
  border-radius: 2px 2px 0 0;
  background: linear-gradient(#dfebfb, #c3d8f3 45%, #abc9ef 50%, #c9dff8);
  box-shadow: inset 0 0 0 1px #e3eefb;
  color: #1d4a91;
}
.tab.active { height: 25px; border-bottom-color: #f3f7ff; background: #f3f7ff; box-shadow: none; color: #000; }
.tab-page {
  flex: 1;
  min-height: 0;
  display: flex;
  align-items: flex-start;
  gap: 7px;
  margin-right: 3px;
  padding: 9px 9px 0;
  border: 1px solid #8ba6cf;
  border-bottom: 0;
  background: #f3f7ff;
  overflow: hidden;
}
.col-left { width: 317px; flex: none; display: flex; flex-direction: column; gap: 7px; }
.general { display: flex; flex-direction: column; gap: 7px; padding: 12px 8px; }
.row { display: grid; grid-template-columns: 99px 1fr; align-items: center; }
.row label { line-height: 20px; padding-bottom: 1px; }
.marked { display: flex; flex-direction: column; gap: 7px; margin: -4px -4px -3px -6px; padding: 4px 4px 3px 6px; background: #e2ee33; }
.marked label { color: #10164a; }
.marked .field { border-color: #b6c92d; background: none; }
.marked .field:read-only:is(input) { background: none; }
.process { width: 322px; }
.process-rows { display: flex; flex-direction: column; gap: 7px; padding: 12px 8px; }
.process .row { grid-template-columns: 84px 1fr; }
.sample { height: 60px; }

.scrollbar { width: 16px; display: flex; flex-direction: column; align-items: center; background: linear-gradient(90deg, #f8f8f8, #ededed); }
.arrow { width: 10px; height: 6px; margin: 6px 0 5px; fill: #46537a; }
.thumb {
  flex: 0 1 298px;
  width: 15px;
  display: flex;
  flex-direction: column;
  align-items: center;
  justify-content: center;
  gap: 1px;
  border: 1px solid #5b6f9f;
  border-radius: 2px;
  background: linear-gradient(90deg, #f0f4f8, #d6dee8 45%, #b6c5d9 50%, #c4d0e1);
}
.thumb i { width: 7px; height: 1px; background: #4b5878; }
.thumb + .arrow { margin-top: auto; }
```
